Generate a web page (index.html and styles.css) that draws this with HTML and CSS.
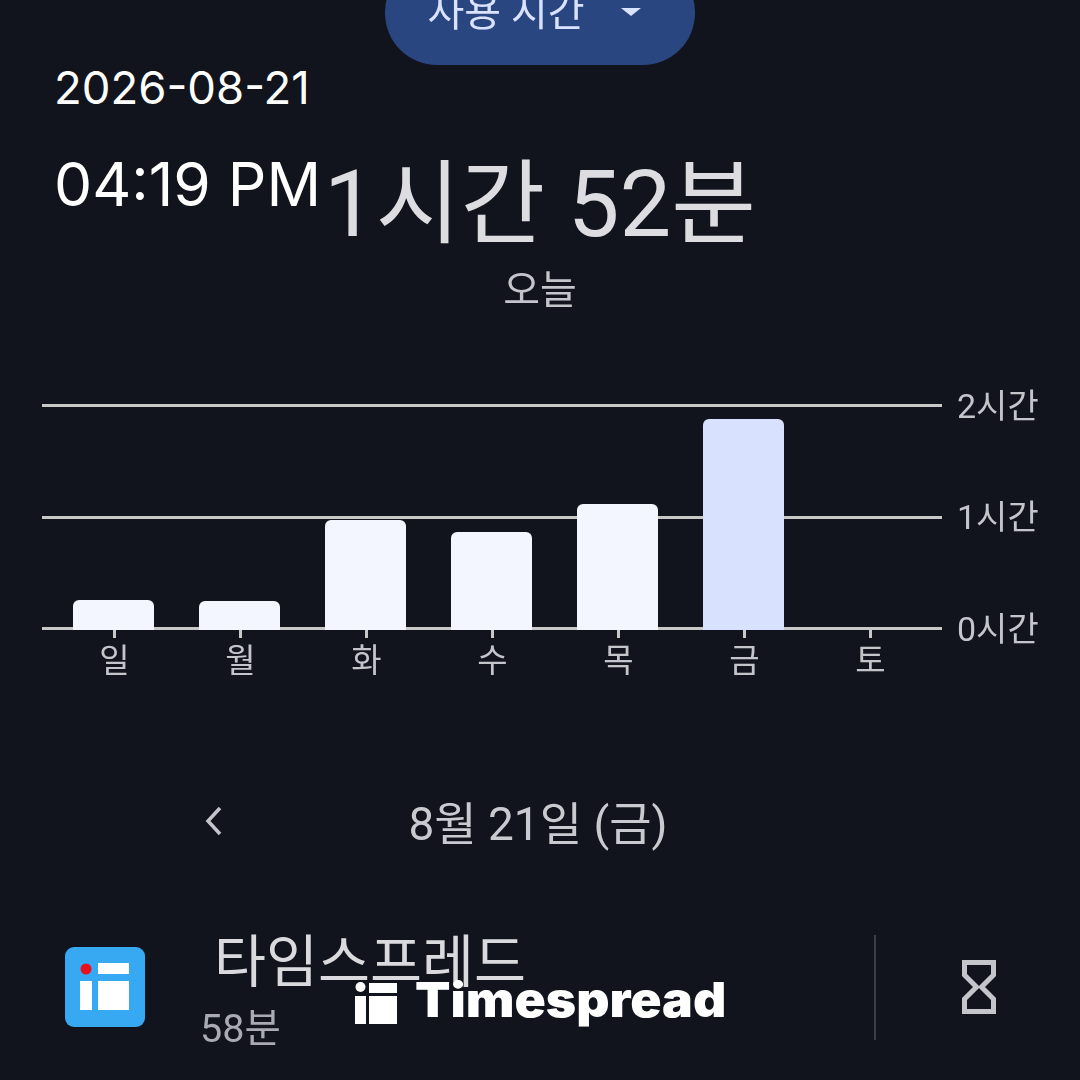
FILE: index.html
```html
<!DOCTYPE html>
<html lang="ko">
<head>
<meta charset="utf-8">
<title>사용 시간</title>
<link rel="stylesheet" href="styles.css">
</head>
<body>
<main class="screen">
  <div class="pill"><span class="pill-label">사용 시간</span><span class="caret"></span></div>
  <div class="total">1시간 52분</div>
  <div class="period">오늘</div>

  <section class="chart">
    <div class="plot">
      <div class="grid-row"><span class="grid-line"></span><span class="grid-label">2시간</span></div>
      <div class="grid-row"><span class="grid-line"></span><span class="grid-label">1시간</span></div>
      <div class="grid-row"><span class="grid-line"></span><span class="grid-label">0시간</span></div>
      <div class="bars">
        <div class="bar" style="height:30px"></div>
        <div class="bar" style="height:29px"></div>
        <div class="bar" style="height:110px"></div>
        <div class="bar" style="height:98px"></div>
        <div class="bar" style="height:126px"></div>
        <div class="bar bar-today" style="height:211px"></div>
        <div class="bar" style="height:0"></div>
      </div>
    </div>
    <div class="days">
      <div class="day">일</div><div class="day">월</div><div class="day">화</div><div class="day">수</div><div class="day">목</div><div class="day">금</div><div class="day">토</div>
    </div>
  </section>

  <div class="date-row">
    <svg class="chevron" width="20" height="32" viewBox="0 0 20 32"><path d="M16 3 L4 16 L16 29" fill="none" stroke="#c4c5cb" stroke-width="3.5"/></svg>
    <span class="date-label">8월 21일 (금)</span>
  </div>

  <div class="app-row">
    <svg class="app-icon" width="80" height="80" viewBox="0 0 80 80">
      <rect width="80" height="80" rx="9" fill="#36a9f2"/>
      <circle cx="21" cy="22" r="5.5" fill="#e8101c"/>
      <rect x="33" y="16" width="31" height="11" fill="#fff"/>
      <rect x="15" y="34" width="12" height="29" fill="#fff"/>
      <rect x="33" y="34" width="31" height="29" fill="#fff"/>
    </svg>
    <div class="app-text">
      <div class="app-name">타임스프레드</div>
      <div class="app-time">58분</div>
    </div>
    <span class="divider"></span>
    <svg class="hourglass" width="34" height="54" viewBox="0 0 34 54"><path d="M2.5 2.5 H31.5 V15 L19.5 27 L31.5 39 V51.500 H2.5 V39 L14.500 27 L2.500 15 Z" fill="none" stroke="#c4c5cb" stroke-width="5"/></svg>
  </div>
</main>

<div class="stamp">
  <div class="stamp-date">2026-08-21</div>
  <div class="stamp-time">04:19 PM</div>
</div>

<div class="watermark">
  <svg class="wm-logo" width="42" height="42" viewBox="0 0 42 42">
    <circle cx="5.5" cy="5" r="5" fill="#fff"/>
    <rect x="14" y="1" width="28" height="10" fill="#fff"/>
    <rect x="0" y="14" width="11" height="28" fill="#fff"/>
    <rect x="14" y="14" width="28" height="28" fill="#fff"/>
  </svg>
  <span class="wm-text">Timespread</span>
</div>
</body>
</html>
```
FILE: styles.css
```css
* { box-sizing: border-box; }
html, body { margin: 0; height: 100%; }
body {
  width: 1080px;
  height: 1080px;
  overflow: hidden;
  position: relative;
  background: #11141c;
  font-family: Roboto, "Noto Sans CJK KR", sans-serif;
}
.screen {
  display: flex;
  flex-direction: column;
  align-items: center;
  height: 1080px;
  filter: blur(0.7px);
}
.pill {
  width: 310px;
  height: 105px;
  margin-top: -40px;
  flex: none;
  background: #2a4680;
  border-radius: 52px;
  display: flex;
  align-items: center;
  justify-content: center;
  gap: 36px;
  color: #d9e2ff;
  font-size: 40px;
}
.pill-label { line-height: 48px; margin-left: -12px; }
.caret {
  width: 0; height: 0;
  border-left: 10px solid transparent;
  border-right: 10px solid transparent;
  border-top: 8px solid #d9e2ff;
  transform: translateY(-1px);
}
.total {
  margin-top: 90px;
  height: 100px;
  line-height: 100px;
  font-size: 92px;
  font-weight: 400;
  color: #dcdce1;
  white-space: nowrap;
}
.period {
  margin-top: 12px;
  height: 48px;
  line-height: 48px;
  font-size: 40px;
  color: #c4c5cb;
}
.chart {
  width: 1080px;
  margin-top: 89px;
  flex: none;
}
.plot {
  position: relative;
  height: 226px;
  padding-left: 42px;
  display: flex;
  flex-direction: column;
  justify-content: space-between;
}
.grid-row {
  height: 3px;
  display: flex;
  align-items: center;
  gap: 15px;
}
.grid-line {
  width: 900px;
  height: 3px;
  background: #c8c8c8;
}
.grid-label {
  font-size: 34px;
  color: #c4c5cb;
  line-height: 40px;
  white-space: nowrap;
}
.bars {
  position: absolute;
  left: 73px;
  bottom: 0;
  display: flex;
  align-items: flex-end;
  gap: 45px;
}
.bar {
  width: 81px;
  background: #f3f5ff;
  border-radius: 6px 6px 0 0;
}
.bar-today { background: #d8e2ff; }
.days {
  display: flex;
  gap: 45px;
  padding-left: 73px;
}
.day {
  width: 81px;
  text-align: center;
  font-size: 33px;
  line-height: 40px;
  color: #c4c5cb;
  padding-top: 11px;
  padding-left: 2px;
  position: relative;
}
.day::before {
  content: "";
  position: absolute;
  left: 40px;
  top: 0;
  width: 3px;
  height: 8px;
  background: #c8c8c8;
}
.date-row {
  width: 1080px;
  height: 60px;
  margin-top: 113px;
  flex: none;
  display: flex;
  align-items: center;
  justify-content: center;
  position: relative;
}
.chevron { position: absolute; left: 204px; top: 11px; }
.date-label {
  font-size: 46px;
  line-height: 60px;
  color: #c9cad0;
  margin-left: -4px;
}
.app-row {
  width: 1080px;
  height: 110px;
  margin-top: 78px;
  padding-left: 65px;
  flex: none;
  display: flex;
  align-items: center;
}
.app-icon { flex: none; }
.app-text {
  width: 672px;
  margin-left: 55px;
  height: 110px;
  padding-top: 3px;
  display: flex;
  flex-direction: column;
}
.app-name {
  margin-left: 14px;
  font-size: 56.5px;
  line-height: 56px;
  color: #d9d9de;
  white-space: nowrap;
}
.app-time {
  font-size: 39.5px;
  line-height: 48px;
  margin-top: 14px;
  color: #a9aab2;
}
.divider {
  width: 2px;
  height: 105px;
  background: #3c3e44;
  flex: none;
  margin-left: 2px;
}
.hourglass { margin-left: 86px; flex: none; }
.stamp {
  position: absolute;
  left: 54px;
  top: 60px;
  color: #fff;
  font-family: Inter, sans-serif;
}
.stamp-date { font-size: 45.5px; line-height: 56px; }
.stamp-time { font-size: 60.5px; line-height: 72px; margin-top: 32px; }
.watermark {
  position: absolute;
  left: 355px;
  top: 980px;
  display: flex;
  align-items: flex-start;
  gap: 18px;
  color: #fff;
}
.wm-logo { flex: none; margin-top: 2px; }
.wm-text {
  font-family: Inter, sans-serif;
  font-weight: 900;
  font-size: 48px;
  line-height: 44px;
  margin-top: -2px;
  transform: scaleX(1.076);
  transform-origin: left center;
}
```
